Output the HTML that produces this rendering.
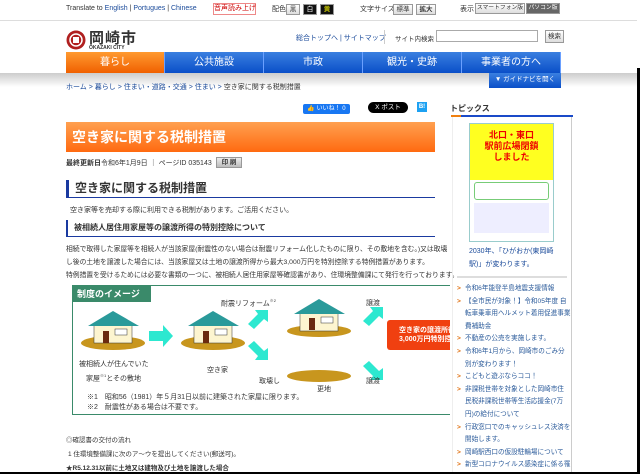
<!DOCTYPE html>
<html><head><meta charset="utf-8"><style>
*{margin:0;padding:0;box-sizing:border-box}
html,body{width:640px;height:474px;overflow:hidden}
body{background:#fff;font-family:"Liberation Sans","Noto Sans CJK JP",sans-serif;font-size:8px;color:#333;position:relative}
.a{position:absolute;white-space:nowrap}
.btn{position:absolute;border:1px solid #999;background:linear-gradient(#fff,#ddd);font-size:6.5px;text-align:center;line-height:9px;height:11px;white-space:nowrap;overflow:hidden}
.nav{position:absolute;top:52px;height:21px;width:99px;color:#fff;font-size:10px;text-align:center;line-height:21px;background:linear-gradient(#3a7fe0,#0a4fc8);border-right:1px solid #6aa0ff}
.bl{color:#1a4a9a}
li{list-style:none;padding-left:8px;position:relative;color:#2a5a9a;font-size:6.6px;line-height:12.6px}
li:before{content:">";position:absolute;left:0;color:#e07010;font-weight:bold}
</style></head><body>
<div class="a" style="left:66px;top:5px;font-size:7px">Translate to <span class="bl">English</span> | <span class="bl">Portugues</span> | <span class="bl">Chinese</span></div>
<div class="a" style="left:213px;top:3px;width:43px;height:12px;border:1px solid #e88;color:#c00;font-size:7px;line-height:10px;text-align:center">音声読み上げ</div>
<div class="a" style="left:272px;top:4px;font-size:7px">配色</div>
<div class="btn" style="left:286px;top:4px;width:14px">黒</div>
<div class="btn" style="left:303px;top:4px;width:14px;background:#111;color:#fff">白</div>
<div class="btn" style="left:320px;top:4px;width:14px;background:#111;color:#ff0">黄</div>
<div class="a" style="left:360px;top:4px;font-size:7px">文字サイズ</div>
<div class="btn" style="left:393px;top:4px;width:20px">標準</div>
<div class="btn" style="left:416px;top:4px;width:20px;font-weight:bold">拡大</div>
<div class="a" style="left:460px;top:4px;font-size:7px">表示</div>
<div class="btn" style="left:475px;top:3px;width:50px;font-size:5.8px">スマートフォン版</div>
<div class="btn" style="left:526px;top:3px;width:34px;background:#666;color:#fff;font-size:5.8px">パソコン版</div>
<div class="a" style="left:0;top:20px;width:637px;height:1px;background:#ddd"></div>
<svg class="a" style="left:66px;top:29px" width="20" height="22"><circle cx="10" cy="11" r="9.5" fill="#b02020"/><circle cx="10" cy="11" r="6" fill="none" stroke="#fff" stroke-width="1.5"/><rect x="7" y="8" width="6" height="6" fill="#fff"/></svg>
<div class="a" style="left:89px;top:27px;font-size:15px;font-weight:bold;color:#333;letter-spacing:1px">岡崎市</div>
<div class="a" style="left:89px;top:45px;font-size:5px;font-weight:bold">OKAZAKI CITY</div>
<div class="a bl" style="left:296px;top:33px;font-size:7px">総合トップへ | サイトマップ</div>
<div class="a" style="left:384px;top:30px;width:1px;height:14px;background:#ccc"></div>
<div class="a" style="left:395px;top:33px;font-size:6.5px">サイト内検索</div>
<div class="a" style="left:436px;top:30px;width:102px;height:12px;border:1px solid #aaa"></div>
<div class="btn" style="left:545px;top:30px;width:19px;height:13px;line-height:11px">検索</div>
<div class="nav" style="left:66px;background:linear-gradient(#ff9a30,#f06000)">暮らし</div>
<div class="nav" style="left:165px">公共施設</div>
<div class="nav" style="left:264px">市政</div>
<div class="nav" style="left:363px">観光・史跡</div>
<div class="nav" style="left:462px;width:99px">事業者の方へ</div>
<div class="a" style="left:0;top:73px;width:637px;height:14px;background:linear-gradient(#ccc,#fff)"></div>
<div class="a" style="left:489px;top:73px;width:72px;height:15px;background:linear-gradient(#3a7fe0,#0a4fc8);color:#fff;font-size:6.5px;text-align:center;line-height:14px">▼ ガイドナビを開く</div>
<div class="a bl" style="left:66px;top:82px;font-size:7px">ホーム &gt; 暮らし &gt; 住まい・道路・交通 &gt; 住まい &gt; <span style="color:#333">空き家に関する税制措置</span></div>
<div class="a" style="left:303px;top:104px;width:47px;height:10px;background:#1877f2;color:#fff;font-size:6px;line-height:10px;text-align:center;border-radius:2px">👍 いいね！ 0</div>
<div class="a" style="left:368px;top:102px;width:40px;height:11px;background:#000;color:#fff;font-size:6.5px;line-height:11px;text-align:center;border-radius:6px">X ポスト</div>
<div class="a" style="left:417px;top:102px;width:10px;height:10px;background:#1da1f2;color:#fff;font-size:6px;font-weight:bold;line-height:10px;text-align:center">B!</div>
<div class="a" style="left:66px;top:122px;width:369px;height:30px;background:linear-gradient(#ffa050,#ff6a10);color:#fff;font-size:14px;font-weight:bold;line-height:30px;padding-left:6px">空き家に関する税制措置</div>
<div class="a" style="left:66px;top:158px;font-size:7px"><b>最終更新日</b>令和6年1月9日 ｜ ページID 035143</div>
<div class="btn" style="left:216px;top:157px;width:26px;font-weight:bold;background:linear-gradient(#eee,#bbb)">印 刷</div>
<div class="a" style="left:66px;top:180px;width:369px;height:18px;border-left:3px solid #1a3aa0;border-bottom:1.5px solid #1a3aa0;font-size:12px;font-weight:bold;padding-left:6px;line-height:16px">空き家に関する税制措置</div>
<div class="a" style="left:70px;top:205px;font-size:7px">空き家等を売却する際に利用できる税制があります。ご活用ください。</div>
<div class="a" style="left:66px;top:220px;width:369px;height:17px;border-left:2px solid #1a3aa0;border-bottom:1px solid #1a3aa0;font-size:8px;font-weight:bold;padding-left:6px;line-height:15px;color:#333">被相続人居住用家屋等の譲渡所得の特別控除について</div>
<div class="a" style="left:66px;top:243px;font-size:6.8px;line-height:13px">相続で取得した家屋等を相続人が当該家屋(耐震性のない場合は耐震リフォーム化したものに限り、その敷地を含む。)又は取壊<br>し後の土地を譲渡した場合には、当該家屋又は土地の譲渡所得から最大3,000万円を特別控除する特例措置があります。<br>特例措置を受けるためには必要な書類の一つに、被相続人居住用家屋等確認書があり、住環境整備課にて発行を行っております。</div>
<div class="a" style="left:72px;top:285px;width:378px;height:130px;border:1px solid #3a8a6a;border-right:none;overflow:hidden">
<div class="a" style="left:0;top:0;width:78px;height:16px;background:#3a8a6a;color:#fff;font-size:9px;font-weight:bold;line-height:16px;padding-left:4px">制度のイメージ</div>
<svg class="a" style="left:0;top:0" width="378" height="130">
<g id="h"><ellipse cx="40" cy="57" rx="32" ry="7" fill="#c8961e"/><rect x="21" y="37" width="38" height="20" fill="#fdf5d0" stroke="#333" stroke-width=".5"/><polygon points="15,40 40,25 66,40" fill="#2a9a9a"/><rect x="30" y="45" width="6" height="12" fill="#6a2a10"/><rect x="42" y="43" width="12" height="6" fill="#fff" stroke="#333" stroke-width=".5"/></g>
<use href="#h" x="100"/>
<g><ellipse cx="246" cy="45" rx="32" ry="6" fill="#c8961e"/><rect x="227" y="25" width="38" height="20" fill="#fdf5d0" stroke="#333" stroke-width=".5"/><polygon points="221,28 246,13 272,28" fill="#2a9a9a"/><rect x="236" y="32" width="6" height="12" fill="#6a2a10"/><rect x="248" y="31" width="12" height="6" fill="#fff" stroke="#333" stroke-width=".5"/></g>
<ellipse cx="246" cy="90" rx="32" ry="6" fill="#c8961e"/>
<polygon points="76,45 90,45 90,39 100,50 90,61 90,55 76,55" fill="#2de8d0"/>
<polygon points="175,38 185,28 182,24 195,24 195,36 191,33 181,43" fill="#2de8d0"/>
<polygon points="175,60 185,70 182,74 195,74 195,62 191,65 181,55" fill="#2de8d0"/>
<polygon points="290,35 300,25 297,21 310,21 310,33 306,30 296,40" fill="#2de8d0"/>
<polygon points="290,80 300,90 297,94 310,94 310,82 306,85 296,75" fill="#2de8d0"/>
<rect x="314" y="34" width="70" height="30" rx="3" fill="#f04010"/>
</svg>
<div class="a" style="left:326px;top:40px;color:#fff;font-size:7px;font-weight:bold;line-height:9px">空き家の譲渡所得<br>3,000万円特別控除</div>
<div class="a" style="left:148px;top:12px;font-size:7px">耐震リフォーム<sup style="font-size:4px">※2</sup></div>
<div class="a" style="left:293px;top:12px;font-size:7px">譲渡</div>
<div class="a" style="left:293px;top:90px;font-size:7px">譲渡</div>
<div class="a" style="left:186px;top:90px;font-size:7px">取壊し</div>
<div class="a" style="left:244px;top:98px;font-size:7px">更地</div>
<div class="a" style="left:134px;top:79px;font-size:7px">空き家</div>
<div class="a" style="left:6px;top:73px;font-size:7px;line-height:11px">被相続人が住んでいた<br>　家屋<sup style="font-size:4px">※1</sup>とその敷地</div>
<div class="a" style="left:14px;top:107px;font-size:7px;line-height:10px">※1　昭和56（1981）年５月31日以前に建築された家屋に限ります。<br>※2　耐震性がある場合は不要です。</div>
</div>
<div class="a" style="left:66px;top:434px;font-size:6.5px">◎確認書の交付の流れ</div>
<div class="a" style="left:68px;top:448px;font-size:6.5px">1 住環境整備課に次のア〜ウを提出してください(郵送可)。</div>
<div class="a" style="left:66px;top:462px;font-size:6.5px;font-weight:bold">★R5.12.31以前に土地又は建物及び土地を譲渡した場合</div>
<div class="a" style="left:450px;top:103px;font-size:8px;font-weight:bold">トピックス</div>
<div class="a" style="left:451px;top:115px;width:122px;height:2px;background:#1a4ac8"></div>
<div class="a" style="left:451px;top:115px;width:10px;height:2px;background:#f08010"></div>
<div class="a" style="left:452px;top:117px;width:120px;height:360px;border-right:1px solid #ccc;border-left:1px solid #eee"></div>
<div class="a" style="left:469px;top:123px;width:85px;height:119px;border:1px solid #9cc;background:#fff">
<div style="height:56px;background:#ffff20;text-align:center;color:#e00;font-size:9px;font-weight:bold;line-height:11px;padding-top:6px">北口・東口<br>駅前広場閉鎖<br>しました</div>
<div style="margin:2px 4px;height:18px;border:1px solid #7c7;border-radius:3px"></div>
<div style="margin:3px 4px;height:30px;background:#eef"></div>
</div>
<div class="a bl" style="left:469px;top:245px;font-size:7px;line-height:13px">2030年、「ひがおか(東岡崎<br>駅)」が変わります。</div>
<div class="a" style="left:457px;top:276px;width:110px;height:2px;background:#ddd"></div>
<ul class="a" style="left:457px;top:283px;width:114px">
<li>令和6年能登半島地震支援情報</li>
<li>【全市民が対象！】令和05年度 自<br>転車乗車用ヘルメット着用促進事業<br>費補助金</li>
<li>不動産の公売を実施します。</li>
<li>令和6年1月から、岡崎市のごみ分<br>別が変わります！</li>
<li>こどもと遊ぶならココ！</li>
<li>非課税世帯を対象とした岡崎市住<br>民税非課税世帯等生活応援金(7万<br>円)の給付について</li>
<li>行政窓口でのキャッシュレス決済を<br>開始します。</li>
<li>岡崎駅西口の仮設駐輪場について</li>
<li>新型コロナウイルス感染症に係る罹</li>
</ul>
<div class="a" style="left:637px;top:68px;width:3px;height:406px;background:#000"></div>
<div class="a" style="left:0;top:472px;width:640px;height:2px;background:#000"></div>
</body></html>
